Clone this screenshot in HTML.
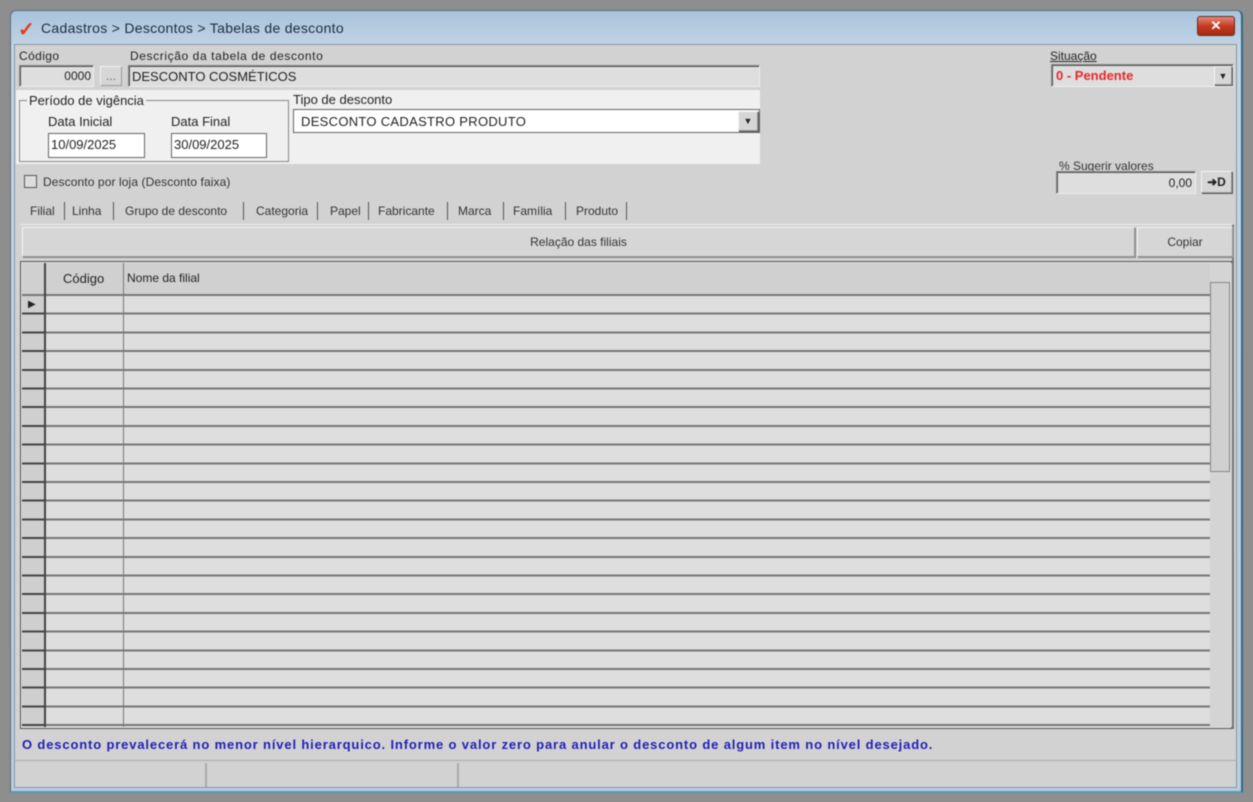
<!DOCTYPE html>
<html><head><meta charset="utf-8"><style>
*{box-sizing:border-box;margin:0;padding:0}
body{width:1253px;height:802px;background:#8e8e8e;font-family:"Liberation Sans",sans-serif;font-size:12px;color:#222;position:relative;overflow:hidden;filter:blur(0.5px)}
.a{position:absolute}
#win{left:10px;top:10px;width:1233px;height:783px;border-radius:6px 6px 0 0;background:linear-gradient(#a9c3dc,#c4d6e6 40px,#b8cde0);border:1px solid #5b6d80;border-right:2px solid #2f6a82;border-bottom:2px solid #5a9bb0}
#body{left:14px;top:44px;width:1223px;height:744px;background:#d2d2d2;border:1px solid #8a96a2}
.in{background:#dedede;border:1px solid #888;border-right-color:#eee;border-bottom-color:#eee;box-shadow:inset 1px 1px 0 #555}
.wh{background:#fff;border:1px solid #666;font-size:13px;padding:2px 3px}
.btn{background:#d6d6d6;border:1px solid #999;border-left-color:#f4f4f4;border-top-color:#f4f4f4;box-shadow:1px 1px 0 #555}
.tab{font-size:12px;color:#333;top:204px}
.sep{top:202px;width:1px;height:18px;background:#555}
.lb{letter-spacing:.4px}
</style></head><body>
<div id="win" class="a"></div>
<div class="a" style="left:18px;top:17px;font-size:20px;color:#e0401a;font-weight:bold">✓</div>
<div class="a" style="left:41px;top:20px;font-size:14px;color:#1d2c40;letter-spacing:.3px">Cadastros &gt; Descontos &gt; Tabelas de desconto</div>
<div class="a" style="left:1197px;top:16px;width:38px;height:20px;border-radius:3px;background:linear-gradient(#e08a7a,#c43a22 50%,#a82a14);border:1px solid #6a2a20;color:#fff;text-align:center;font-weight:bold;font-size:13px;line-height:17px">✕</div>
<div id="body" class="a"></div>

<div class="a lb" style="left:19px;top:49px">Código</div>
<div class="a lb" style="left:130px;top:49px;letter-spacing:.6px">Descrição da tabela de desconto</div>
<div class="a in" style="left:19px;top:65px;width:75px;height:22px;text-align:right;padding:3px 2px">0000</div>
<div class="a btn" style="left:100px;top:66px;width:22px;height:20px;text-align:center;color:#666;line-height:18px;box-shadow:none">...</div>
<div class="a in" style="left:128px;top:65px;width:632px;height:22px;padding:3px 3px;font-size:13px">DESCONTO COSMÉTICOS</div>

<div class="a" style="left:1050px;top:49px;text-decoration:underline">Situação</div>
<div class="a in" style="left:1051px;top:64px;width:183px;height:23px;color:#e8282c;font-weight:bold;font-size:13px;padding:3px 4px">0 - Pendente</div>
<div class="a btn" style="left:1214px;top:66px;width:18px;height:19px;font-size:9px;text-align:center;line-height:18px">▼</div>

<div class="a" style="left:16px;top:90px;width:744px;height:74px;background:#f0f0f0"></div>
<div class="a" style="left:19px;top:100px;width:270px;height:62px;border:1px solid #888"></div>
<div class="a" style="left:27px;top:93px;background:#f0f0f0;padding:0 2px;font-size:13px">Período de vigência</div>
<div class="a" style="left:48px;top:114px;font-size:13px">Data Inicial</div>
<div class="a" style="left:171px;top:114px;font-size:13px">Data Final</div>
<div class="a wh" style="left:48px;top:133px;width:97px;height:25px;padding:3px 2px">10/09/2025</div>
<div class="a wh" style="left:171px;top:133px;width:96px;height:25px;padding:3px 2px">30/09/2025</div>
<div class="a" style="left:293px;top:92px;font-size:13px">Tipo de desconto</div>
<div class="a wh" style="left:293px;top:109px;width:467px;height:24px;padding:4px 7px;letter-spacing:.3px">DESCONTO CADASTRO PRODUTO</div>
<div class="a btn" style="left:738px;top:111px;width:20px;height:20px;font-size:9px;text-align:center;line-height:19px">▼</div>

<div class="a" style="left:24px;top:175px;width:13px;height:13px;border:1px solid #555;background:#ddd"></div>
<div class="a" style="left:43px;top:175px;color:#333;letter-spacing:.1px">Desconto por loja (Desconto faixa)</div>

<div class="a" style="left:1059px;top:159px;text-decoration:underline;color:#333">% Sugerir valores</div>
<div class="a in" style="left:1056px;top:171px;width:140px;height:23px;text-align:right;padding:4px 3px">0,00</div>
<div class="a btn" style="left:1201px;top:171px;width:31px;height:22px;text-align:center;font-size:12px;font-weight:bold;line-height:20px">➜D</div>

<div class="a tab" style="left:30px">Filial</div><div class="a sep" style="left:64px"></div>
<div class="a tab" style="left:72px">Linha</div><div class="a sep" style="left:113px"></div>
<div class="a tab" style="left:125px">Grupo de desconto</div><div class="a sep" style="left:243px"></div>
<div class="a tab" style="left:256px">Categoria</div><div class="a sep" style="left:317px"></div>
<div class="a tab" style="left:330px">Papel</div><div class="a sep" style="left:368px"></div>
<div class="a tab" style="left:378px">Fabricante</div><div class="a sep" style="left:447px"></div>
<div class="a tab" style="left:458px">Marca</div><div class="a sep" style="left:503px"></div>
<div class="a tab" style="left:513px">Família</div><div class="a sep" style="left:565px"></div>
<div class="a tab" style="left:576px">Produto</div><div class="a sep" style="left:626px"></div>

<div class="a" style="left:20px;top:224px;width:1214px;height:505px;border-top:1px solid #eee;border-right:2px solid #777"></div>
<div class="a btn" style="left:22px;top:227px;width:1113px;height:30px;text-align:center;line-height:28px;color:#333;box-shadow:1px 1px 0 #888">Relação das filiais</div>
<div class="a btn" style="left:1137px;top:227px;width:96px;height:30px;text-align:center;line-height:28px;color:#333;box-shadow:1px 1px 0 #888">Copiar</div>

<div class="a" style="left:20px;top:261px;width:1212px;height:468px;border:1px solid #555;background:#dedede"></div>
<div class="a" style="left:22px;top:263px;width:1188px;height:33px;background:#d0d0d0;border-bottom:2px solid #777"></div>
<div class="a" style="left:63px;top:271px;font-size:13px">Código</div>
<div class="a" style="left:127px;top:271px">Nome da filial</div>
<div class="a" style="left:22px;top:296px;width:1188px;height:431px;background:repeating-linear-gradient(#dedede 0,#dedede 16.7px,#777 16.7px,#777 18.7px)"></div>
<div class="a" style="left:22px;top:296px;width:22px;height:431px;background:repeating-linear-gradient(#cfcfcf 0,#cfcfcf 16.7px,#444 16.7px,#444 18.7px)"></div>
<div class="a" style="left:44px;top:263px;width:2px;height:464px;background:#444"></div>
<div class="a" style="left:123px;top:263px;width:1px;height:464px;background:#777"></div>
<div class="a" style="left:28px;top:299px;font-size:10px">▶</div>
<div class="a" style="left:1210px;top:263px;width:22px;height:464px;background:#d4d4d4"></div>
<div class="a" style="left:1210px;top:282px;width:20px;height:190px;border:1px solid #888;background:#d0d0d0"></div>

<div class="a" style="left:22px;top:737px;color:#2020b8;font-weight:bold;font-size:13px;letter-spacing:.85px;white-space:nowrap">O desconto prevalecerá no menor nível hierarquico. Informe o valor zero para anular o desconto de algum item no nível desejado.</div>
<div class="a" style="left:14px;top:760px;width:1223px;height:1px;background:#aaa"></div>
<div class="a" style="left:15px;top:763px;width:192px;height:24px;border-right:2px solid #aaa"></div>
<div class="a" style="left:209px;top:763px;width:250px;height:24px;border-right:2px solid #aaa"></div>
</body></html>
